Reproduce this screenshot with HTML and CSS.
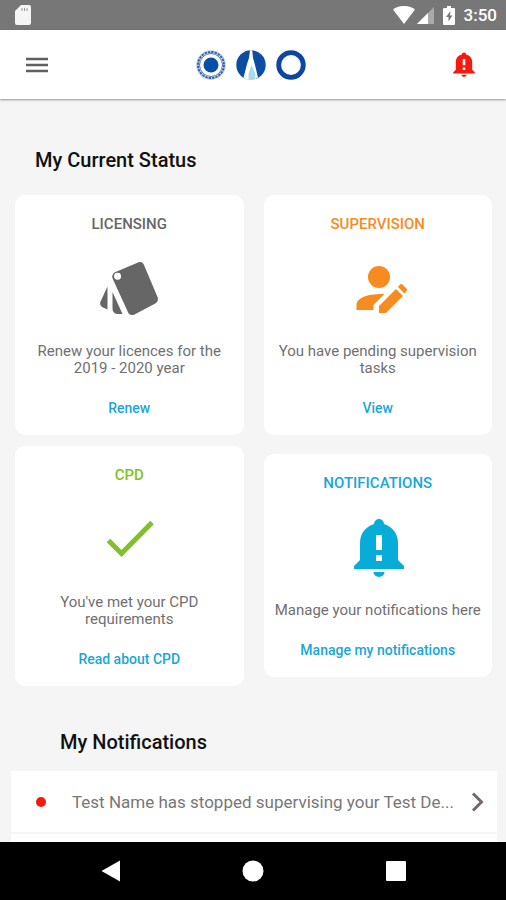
FILE: index.html
```html
<!DOCTYPE html>
<html lang="en">
<head>
    <meta charset="utf-8">
    <meta name="viewport" content="width=device-width, initial-scale=1">
    <title>My Current Status</title>
    <link rel="stylesheet" href="styles.css">
</head>
<body>
    <div class="status-bar">
        <svg class="sd-icon" width="16" height="20" viewBox="0 0 16 20">
            <path fill="#f5f5f5" d="M6 0h8a2 2 0 0 1 2 2v16a2 2 0 0 1-2 2H2a2 2 0 0 1-2-2V6z"/>
            <path stroke="#999" stroke-width="1" d="M7 3v3M9.500 3v3M12 3v3"/>
        </svg>
        <div class="status-right">
            <svg width="22" height="18" viewBox="0 0 22 18">
                <path fill="#fff" d="M0 3.500C6-1.200 16-1.200 22 3.500L11 18z"/>
            </svg>
            <svg class="signal-icon" width="17" height="17" viewBox="0 0 17 17">
                <path fill="#aaa" d="M17 0v17H0z"/>
                <path fill="#fff" d="M11 6v11H0z"/>
            </svg>
            <svg class="battery-icon" width="12" height="19" viewBox="0 0 12 19">
                <path fill="#fff" d="M4 0h4v2h3a1 1 0 0 1 1 1v15a1 1 0 0 1-1 1H1a1 1 0 0 1-1-1V3a1 1 0 0 1 1-1h3z"/>
                <path fill="#777" d="M7.500 5L3 11h2.500v4.500L9.500 9.500H7z"/>
            </svg>
            <span class="clock">3:50</span>
        </div>
    </div>

    <header class="app-bar">
        <button class="icon-button" type="button" aria-label="Menu">
            <svg width="22" height="16" viewBox="0 0 22 16">
                <path stroke="#606060" stroke-width="2.400" d="M0 2h22M0 8h22M0 14h22"/>
            </svg>
        </button>
        <div class="logos">
            <svg width="30" height="30" viewBox="0 0 30 30">
                <circle cx="15" cy="15" r="13.500" fill="#fff" stroke="#b9c8e2" stroke-width="2.600"/>
                <circle cx="15" cy="15" r="13" fill="none" stroke="#2a5ba8" stroke-width="1.800" stroke-dasharray="2.200 1.200"/>
                <circle cx="15" cy="15" r="11.500" fill="none" stroke="#4a74b5" stroke-width="1"/>
                <circle cx="15" cy="15" r="7.500" fill="#0651a5"/>
            </svg>
            <svg width="30" height="30" viewBox="0 0 30 30">
                <circle cx="15" cy="15" r="14.700" fill="#0b4da2"/>
                <path fill="#fff" d="M14 0.300h2.200l.8 7.700 2 7 3 12.500-3.500 1.700-3.500.7-4-.5-3.500-1.700L11 14l2-6z"/>
                <path fill="#a6dbea" d="M15.500 15l-3 9v5.500l3 .4 3.500-.6.500-5z"/>
            </svg>
            <svg width="30" height="30" viewBox="0 0 30 30">
                <circle cx="15" cy="15" r="12.300" fill="#fff" stroke="#0b47a0" stroke-width="4.800"/>
            </svg>
        </div>
        <button class="icon-button" type="button" aria-label="Alerts">
            <svg width="22" height="25" viewBox="0 0 50 58">
                <path fill="#f5190e" fill-rule="evenodd" d="M20 6a5 5 0 0 1 10 0C39 8 44 15 44 24v17l6 6v3H0v-3l6-6V24C6 15 11 8 20 6zM22 16v15h6V16zM22 36v6h6v-6z"/>
                <path fill="#f5190e" d="M19 53h12a6 5 0 0 1-12 0z"/>
            </svg>
        </button>
    </header>

    <main class="content">
        <h2 class="section-title">My Current Status</h2>
        <div class="cards">
            <div class="column">
                <section class="card">
                    <h3 class="card-title grey">LICENSING</h3>
                    <svg class="card-icon" width="60" height="60" viewBox="0 0 60 60">
                        <path fill="#666" fill-rule="evenodd" d="M16.500 13L39 3.500c3-1.200 5 .2 6 2.500L58.500 38c1.200 3-.2 5.600-2.600 6.700L35.500 55.500c-3 1.400-5.500.2-6.500-2.200L13.800 20c-1.200-3 0-5.800 2.700-7zM18.500 13.800a3.500 3.500 0 1 0 .1 7 3.500 3.500 0 0 0-.1-7z"/>
                        <path fill="#666" d="M8.500 27.500v23l-4-1.800C1.500 47.300.3 45 1.800 42zM13.500 33l10 22h-4c-4 0-6-2-6-6z"/>
                    </svg>
                    <p class="card-text">Renew your licences for the 2019 - 2020 year</p>
                    <a class="card-link" href="#renew">Renew</a>
                </section>
                <section class="card">
                    <h3 class="card-title green">CPD</h3>
                    <svg class="card-icon" width="60" height="60" viewBox="0 0 60 60">
                        <path fill="none" stroke="#80c226" stroke-width="5" d="M9.500 30.500L22.500 43.500 53 12.500"/>
                    </svg>
                    <p class="card-text">You've met your CPD requirements</p>
                    <a class="card-link" href="#cpd">Read about CPD</a>
                </section>
            </div>
            <div class="column wide-gap">
                <section class="card">
                    <h3 class="card-title orange">SUPERVISION</h3>
                    <svg class="card-icon" width="60" height="60" viewBox="0 0 60 60">
                        <g fill="#f68b1f">
                            <circle cx="31" cy="18" r="11"/>
                            <path d="M8.500 51v-5c0-8 13-11.500 28-11L25.500 46v5z"/>
                            <path d="M31 54v-7l17-17 7 7-17 17zM50 28l2-2.500c.8-.8 1.600-.8 2.400 0l4 4c.8.8.8 1.600 0 2.400L56.500 34.500z"/>
                        </g>
                    </svg>
                    <p class="card-text">You have pending supervision tasks</p>
                    <a class="card-link" href="#supervision">View</a>
                </section>
                <section class="card">
                    <h3 class="card-title blue">NOTIFICATIONS</h3>
                    <svg class="card-icon" width="60" height="60" viewBox="0 0 60 60">
                        <g transform="translate(6 1)">
                            <path fill="#08acd9" fill-rule="evenodd" d="M20 5a5 5 0 0 1 10 0C39 8 44 15 44 24v17l6 6v3H0v-3l6-6V24C6 15 11 8 20 5zM22 16v15h6V16zM22 36v6h6v-6z"/>
                            <path fill="#08acd9" d="M19.500 53h11a5.500 5 0 0 1-11 0z"/>
                        </g>
                    </svg>
                    <p class="card-text">Manage your notifications here</p>
                    <a class="card-link" href="#notifications">Manage my notifications</a>
                </section>
            </div>
        </div>

        <h2 class="section-title indent">My Notifications</h2>
        <ul class="notifications">
            <li>
                <a class="notification" href="#notification">
                    <span class="dot"></span>
                    <span class="message">Test Name has stopped supervising your Test De...</span>
                    <svg width="14" height="20" viewBox="0 0 14 20">
                        <path fill="none" stroke="#756868" stroke-width="3" d="M2 1.500L10.500 10 2 18.500"/>
                    </svg>
                </a>
            </li>
            <li></li>
        </ul>
    </main>

    <nav class="nav-bar">
        <button class="icon-button" type="button" aria-label="Back">
            <svg width="22" height="22" viewBox="0 0 22 22"><path fill="#fff" d="M21 .5v21L2.500 11z"/></svg>
        </button>
        <button class="icon-button" type="button" aria-label="Home">
            <svg width="22" height="22" viewBox="0 0 22 22"><circle cx="11" cy="11" r="10.500" fill="#fff"/></svg>
        </button>
        <button class="icon-button" type="button" aria-label="Recent apps">
            <svg width="22" height="22" viewBox="0 0 22 22"><rect x="1" y="1" width="20" height="20" rx="1" fill="#fff"/></svg>
        </button>
    </nav>
</body>
</html>
```
FILE: styles.css
```css
* {
    box-sizing: border-box;
}

body {
    display: flex;
    flex-direction: column;
    height: 100vh;
    margin: 0;
    font-family: Roboto, sans-serif;
    background-color: #f5f5f5;
}

h2, h3, p, ul {
    margin: 0;
    padding: 0;
}

svg {
    display: block;
}

.icon-button {
    padding: 0;
    border: none;
    background: none;
    cursor: pointer;
}

/* Phone status bar */
.status-bar {
    display: flex;
    flex-shrink: 0;
    align-items: center;
    justify-content: space-between;
    height: 30px;
    padding: 0 9px 0 15px;
    background-color: #777;
}

.status-right {
    display: flex;
    align-items: center;
}

.signal-icon {
    margin-left: 2px;
}

.battery-icon {
    margin: 0 9px;
}

.clock {
    font-size: 17px;
    font-weight: 500;
    color: #fff;
}

/* App header */
.app-bar {
    display: flex;
    flex-shrink: 0;
    align-items: center;
    justify-content: space-between;
    height: 69px;
    padding: 0 31px 0 26px;
    background-color: #fff;
    box-shadow: 0 1px 2px rgba(0, 0, 0, 0.4);
    z-index: 1;
}

.logos {
    display: flex;
    gap: 10px;
}

/* Content */
.content {
    flex: 1;
    min-height: 0;
    padding-top: 48px;
    overflow: hidden;
}

.section-title {
    padding-left: 35px;
    font-size: 20px;
    font-weight: 500;
    line-height: 26px;
    color: #111;
}

.section-title.indent {
    margin-top: 43px;
    padding-left: 60px;
}

.cards {
    display: grid;
    grid-template-columns: 1fr 1fr;
    gap: 20px;
    margin-top: 22px;
    padding: 0 14px 0 15px;
}

.column {
    display: flex;
    flex-direction: column;
    gap: 11px;
}

.wide-gap {
    gap: 19px;
}

.card {
    display: flex;
    flex-direction: column;
    align-items: center;
    padding: 20px 8px 18px;
    text-align: center;
    background-color: #fff;
    border-radius: 10px;
}

.card-title {
    font-size: 15px;
    font-weight: 500;
    line-height: 18px;
}

.grey {
    color: #666;
}

.green {
    color: #80c226;
}

.orange {
    color: #f68b1f;
}

.blue {
    color: #1ba6d6;
}

.card-icon {
    margin: 26px 0 24px;
}

.card-text {
    font-size: 15px;
    line-height: 17px;
    color: #707070;
}

.card-link {
    margin-top: 22px;
    font-size: 14px;
    font-weight: 500;
    line-height: 18px;
    color: #1ba6d6;
    text-decoration: none;
}

/* Notification list */
.notifications {
    margin: 16px 9px 0 11px;
    list-style: none;
    background-color: #fff;
}

.notifications li {
    height: 63px;
    border-bottom: 2px solid #f5f5f5;
}

.notification {
    display: flex;
    align-items: center;
    height: 100%;
    padding: 0 12px 0 25px;
    color: #777;
    text-decoration: none;
}

.dot {
    flex-shrink: 0;
    width: 10px;
    height: 10px;
    border-radius: 50%;
    background-color: #f5190e;
}

.message {
    flex: 1;
    margin-left: 26px;
    font-size: 17px;
    white-space: nowrap;
}

/* Phone navigation bar */
.nav-bar {
    display: flex;
    flex-shrink: 0;
    align-items: center;
    justify-content: space-between;
    height: 58px;
    padding: 0 99px;
    background-color: #000;
}
```
